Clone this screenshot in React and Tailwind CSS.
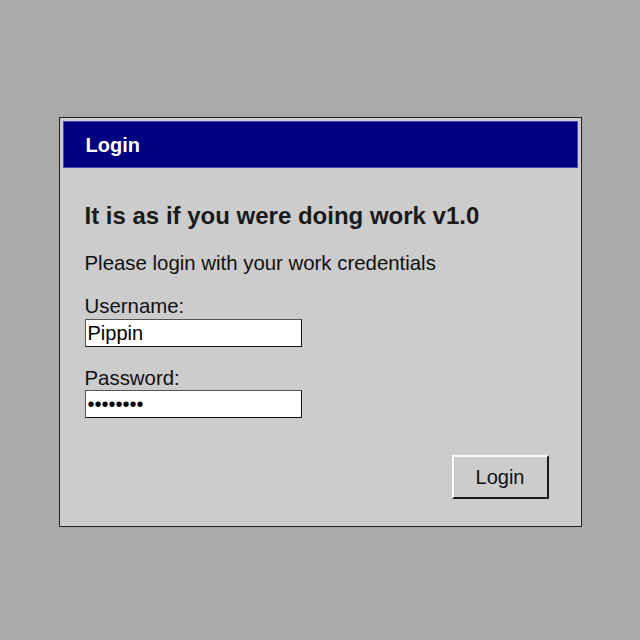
export default function App() {
  return (
    <div className="flex min-h-screen items-center justify-center bg-[#aaaaaa] pt-[4px] [font-family:'Liberation_Sans',Arial,sans-serif]">
      <div className="w-[523px] border border-[#222] bg-[#cccccc] p-[3px]">
        <div className="flex h-[47px] items-center border border-[#4a4aa8] bg-[#000080] pl-[22px] text-[20px] font-bold text-white">
          Login
        </div>
        <div className="flex flex-col px-[22px] pb-[24px]">
          <h1 className="mt-[34px] text-[24px] leading-[28px] font-bold text-[#1a1a1a]">
            It is as if you were doing work v1.0
          </h1>
          <p className="mt-[21px] text-[20.4px] leading-[24px] text-[#111]">
            Please login with your work credentials
          </p>
          <label className="mt-[19px] text-[20.4px] leading-[24px] text-[#111]">Username:</label>
          <input
            className="mt-[1px] h-[28px] w-[217px] border border-t-[#555] border-l-[#555] border-r-[#111] border-b-[#111] bg-white px-[2px] text-[20px] text-black outline-none"
            defaultValue="Pippin"
          />
          <label className="mt-[19px] text-[20.4px] leading-[24px] text-[#111]">Password:</label>
          <input
            type="password"
            className="h-[28px] w-[217px] border border-t-[#555] border-l-[#555] border-r-[#111] border-b-[#111] bg-white px-[2px] text-[20px] text-black outline-none"
            defaultValue="password"
          />
          <div className="mt-[37px] flex justify-end pr-[7px]">
            <button className="h-[44px] w-[97px] border-2 border-t-white border-l-white border-r-[#1a1a1a] border-b-[#1a1a1a] bg-[#cccccc] text-[20px] text-[#111]">
              Login
            </button>
          </div>
        </div>
      </div>
    </div>
  );
}
